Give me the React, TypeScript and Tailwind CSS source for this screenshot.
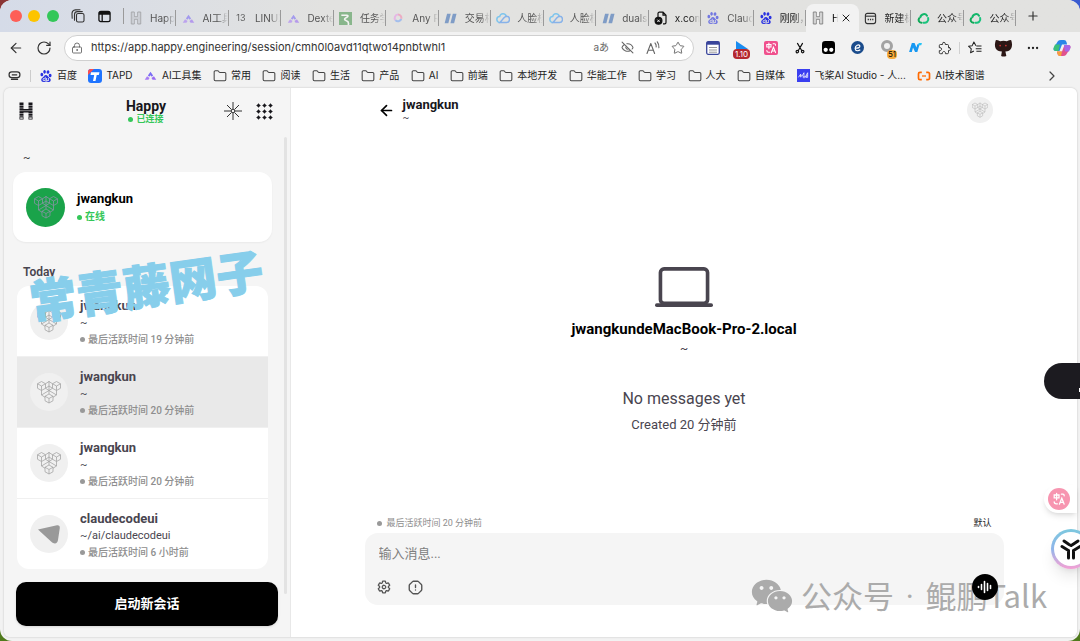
import type { ReactNode } from "react";
import clsx from "clsx";
import {
  ArrowLeft,
  ChevronRight,
  Ellipsis,
  EyeOff,
  Folder,
  LockKeyhole,
  OctagonAlert,
  Plus,
  RotateCw,
  Star,
  X,
} from "lucide-react";
import { AiFillWechat } from "react-icons/ai";
import { IoExtensionPuzzleOutline, IoLaptopOutline, IoSettingsOutline } from "react-icons/io5";
import { SiBaidu } from "react-icons/si";

type TabItem = {
  title: string;
  icon: ReactNode;
  asleep?: boolean;
  active?: boolean;
};

type Session = {
  id: number;
  name: string;
  path: string;
  lastSeen: string;
  avatar: "cubes" | "triangle";
  selected?: boolean;
};

function HappyMark({ className }: { className?: string }) {
  return (
    <svg viewBox="0 0 14 16" className={className} fill="none" stroke="currentColor" aria-hidden="true">
      <path d="M1.500 1h3.500v5.500h4V1h3.500v14H9V9.500H5V15H1.500z" strokeWidth="1" />
      <path d="M3.200 1v14M10.800 1v14M3.200 8h7.600" strokeWidth=".4" />
    </svg>
  );
}

function HappyLogo() {
  return (
    <svg viewBox="0 0 14 18" className="h-[18px] w-[14px]" aria-hidden="true">
      <path d="M.5.500h4v6.500h5V.5h4v17h-4V10.500h-5v7h-4z" fill="#18171c" />
      <path d="M0 3.500h5M9 3.500h5M0 6h5M9 6h5M0 8.700h14M0 11.500h5M9 11.500h5M0 14h5M9 14h5" stroke="#f5f5f5" strokeWidth=".5" />
      <path d="M1.200 15.300h2.600v1.600H1.200zM10.200 15.300h2.600v1.600h-2.600z" fill="#bbb" />
    </svg>
  );
}

function HillsIcon() {
  return (
    <svg viewBox="0 0 14 14" className="size-[13px]" aria-hidden="true">
      <path d="M4.200 7 7 3l2.800 4L8.300 8.300 7 6.800 5.700 8.300z" fill="#7c6cf5" />
      <path d="M.8 11.500 3.300 7.800 6 9.800 4.800 11.500z" fill="#a87cf5" />
      <path d="M13.200 11.500 10.700 7.800 8 9.800l1.200 1.700z" fill="#9a6cf2" />
    </svg>
  );
}

function SlashIcon() {
  return (
    <svg viewBox="0 0 14 14" className="size-[13px]" aria-hidden="true">
      <path d="M3.300 2h4L4.700 12h-4zM9.500 2h4l-2.600 10h-4z" fill="#3f6fb5" />
    </svg>
  );
}

function CloudIcon() {
  return (
    <svg viewBox="0 0 14 14" className="size-[14px]" fill="none" strokeWidth="1.500" aria-hidden="true">
      <path d="M4 11.500a3 3 0 0 1-.3-6C4.500 2.300 9 1.700 10.200 5.200" stroke="#3fb3f5" />
      <path d="M4 11.500h6.300a3 3 0 0 0 .2-6.200C8.500 5.300 7.500 7.500 4 11.500z" stroke="#4b93f0" />
    </svg>
  );
}

function GreenSwirl() {
  return (
    <svg viewBox="0 0 14 14" className="size-[13px]" fill="none" strokeWidth="2.200" strokeLinecap="round" aria-hidden="true">
      <path d="M3.600 5.600C4.500 1.800 9 1.200 10.800 4" stroke="#12b76a" />
      <path d="M12 6.500c1 3.300-2 5.800-5 5" stroke="#19c37d" />
      <path d="M4.800 11.500C2 11.300 1 8.800 2.300 6.800" stroke="#0fa958" />
    </svg>
  );
}

function RingIcon() {
  return (
    <svg viewBox="0 0 14 14" className="size-[12px]" fill="none" strokeWidth="2.400" aria-hidden="true">
      <path d="M7 3a4 4 0 0 0-3 6.500" stroke="#e79be8" />
      <path d="M4 9.500A4 4 0 0 0 10.800 8" stroke="#7aa7f5" />
      <path d="M10.800 8A4 4 0 0 0 7 3" stroke="#f48ab0" />
    </svg>
  );
}

function TranslateGlyph({ className }: { className?: string }) {
  return (
    <svg viewBox="0 0 20 20" className={className} fill="none" stroke="#fff" strokeWidth="1.600" strokeLinecap="round" aria-hidden="true">
      <path d="M4 5h6v3.500H4zM7 3v8M13 4h2q1.500 0 1.500 2M4 13.500q0 2.500 2.500 2.500H8M10.500 16.500l3-7.500 3 7.500M11.500 14.300h4" />
    </svg>
  );
}

const tabs: TabItem[] = [
  { title: "Happy", icon: <HappyMark className="h-[14px] w-[12px] text-[#777]" />, asleep: true },
  { title: "AI工具集", icon: <HillsIcon />, asleep: true },
  { title: "LINUX DO", icon: <span className="text-[9px] text-black">13</span>, asleep: true },
  { title: "Dexter", icon: <HillsIcon />, asleep: true },
  {
    title: "任务学习",
    icon: (
      <svg viewBox="0 0 14 14" className="size-[13px]" aria-hidden="true">
        <path d="M0 0h14v14H0z" fill="#4f9a55" />
        <path d="M2.500 3.500H8.500Q11 4 8 6 4 8 8 9.500q3 1 2 4.500" fill="none" stroke="#fff" strokeWidth="1.800" />
      </svg>
    ),
    asleep: true,
  },
  { title: "Any Router", icon: <RingIcon />, asleep: true },
  { title: "交易相关", icon: <SlashIcon />, asleep: true },
  { title: "人脸核身", icon: <CloudIcon />, asleep: true },
  { title: "人脸核身", icon: <CloudIcon />, asleep: true },
  { title: "dualsub", icon: <SlashIcon />, asleep: true },
  {
    title: "x.com",
    icon: (
      <svg viewBox="0 0 14 14" className="size-[14px]" fill="none" stroke="#111" strokeWidth="1.200" aria-hidden="true">
        <path d="M4 6V2.500A1.300 1.300 0 0 1 5.300 1.200H9l3 3v7.300a1.300 1.300 0 0 1-1.300 1.300H9M9 1.200v3h3" />
        <circle cx="4.500" cy="9.800" r="3.400" fill="#111" />
        <path d="m3.300 8.600 2.400 2.400m0-2.400-2.400 2.400" stroke="#fff" strokeWidth=".9" />
      </svg>
    ),
  },
  { title: "Claude", icon: <SiBaidu className="size-[12px] text-[#2932e1]" />, asleep: true },
  { title: "刚刚，发布", icon: <SiBaidu className="size-[12px] text-[#2932e1]" /> },
  { title: "Happy", icon: <HappyMark className="h-[14px] w-[12px] text-[#777]" />, active: true },
  {
    title: "新建标签页",
    icon: (
      <svg viewBox="0 0 14 14" className="size-[13px]" fill="none" stroke="#333" strokeWidth="1.200" aria-hidden="true">
        <rect x="1.500" y="1.500" width="11" height="11" rx="2.200" />
        <path d="M1.500 4.500h11" />
        <path d="M4 8h1.300M6.400 8h1.300M8.800 8h1.300" strokeWidth="1.500" />
      </svg>
    ),
  },
  { title: "公众号", icon: <GreenSwirl /> },
  { title: "公众号", icon: <GreenSwirl /> },
];

const folderIcon = <Folder className="size-[14px] text-[#444]" strokeWidth={1.8} />;

const bookmarks: { title: string; icon: ReactNode }[] = [
  { title: "百度", icon: <SiBaidu className="size-[12px] text-[#2932e1]" /> },
  {
    title: "TAPD",
    icon: (
      <svg viewBox="0 0 14 14" className="size-[14px]" aria-hidden="true">
        <rect width="14" height="14" rx="3" fill="#1f74ff" />
        <path d="M3 0h3L0 6V3a3 3 0 0 1 3-3z" fill="#ff4b4b" />
        <path d="M3 3.300h8.500L10.800 6H8.700l-1.200 6H5l1.200-6H2.500z" fill="#fff" />
      </svg>
    ),
  },
  { title: "AI工具集", icon: <HillsIcon /> },
  { title: "常用", icon: folderIcon },
  { title: "阅读", icon: folderIcon },
  { title: "生活", icon: folderIcon },
  { title: "产品", icon: folderIcon },
  { title: "AI", icon: folderIcon },
  { title: "前端", icon: folderIcon },
  { title: "本地开发", icon: folderIcon },
  { title: "华能工作", icon: folderIcon },
  { title: "学习", icon: folderIcon },
  { title: "人大", icon: folderIcon },
  { title: "自媒体", icon: folderIcon },
  {
    title: "飞桨AI Studio - 人...",
    icon: (
      <svg viewBox="0 0 14 14" className="size-[13px]" aria-hidden="true">
        <path d="M0 0h14v14H0z" fill="#3a3ff0" />
        <path d="M1.500 9 4 5.500V9M3 7.500h2.500L7.500 4v6M6 8.500h3L11.500 4v5H9.500L11 6.500" fill="none" stroke="#fff" strokeWidth=".8" />
      </svg>
    ),
  },
  {
    title: "AI技术图谱",
    icon: (
      <svg viewBox="0 0 14 14" className="size-[14px]" fill="none" stroke="#ff6a00" strokeWidth="1.700" aria-hidden="true">
        <path d="M4.800 3.300H3a1.500 1.500 0 0 0-1.500 1.500v4.400A1.500 1.500 0 0 0 3 10.700h1.800M9.200 3.300H11a1.500 1.500 0 0 1 1.500 1.500v4.400a1.500 1.500 0 0 1-1.500 1.500H9.200" />
        <path d="M5 7h4" strokeWidth="1.300" />
      </svg>
    ),
  },
];

const sessions: Session[] = [
  { id: 1, name: "jwangkun", path: "~", lastSeen: "最后活跃时间 19 分钟前", avatar: "cubes" },
  { id: 2, name: "jwangkun", path: "~", lastSeen: "最后活跃时间 20 分钟前", avatar: "cubes", selected: true },
  { id: 3, name: "jwangkun", path: "~", lastSeen: "最后活跃时间 20 分钟前", avatar: "cubes" },
  { id: 4, name: "claudecodeui", path: "~/ai/claudecodeui", lastSeen: "最后活跃时间 6 小时前", avatar: "triangle" },
];

function Cubes({ className }: { className?: string }) {
  return (
    <svg viewBox="0 0 48 48" className={className} fill="none" stroke="currentColor" strokeWidth="1.500" strokeLinejoin="round" aria-hidden="true">
      {/* corner cubes */}
      <path d="M9 3l8 4.500v9L9 21l-8-4.500v-9zM1 7.500 9 12l8-4.500M9 12v9" />
      <path d="M39 3l8 4.500v9L39 21l-8-4.500v-9zM31 7.500l8 4.500 8-4.500M39 12v9" />
      <path d="M24 28l8 4.500v9L24 46l-8-4.500v-9zM16 32.500l8 4.500 8-4.500M24 37v9" />
      {/* core */}
      <path d="M24 2v26M17 7.500 24 3l7 4.500M17 16.500 24 12l7 4.500M9 21v9l7 4.500M39 21v9l-7 4.500M9 30l15-9 15 9M17 16.500 24 21l7-4.500" />
    </svg>
  );
}

function Avatar({ kind }: { kind: Session["avatar"] }) {
  return (
    <span className="flex size-[38px] shrink-0 items-center justify-center rounded-full bg-[#f0f0f0] text-[#a0a0a0]">
      {kind === "cubes" ? (
        <Cubes className="size-6" />
      ) : (
        <svg viewBox="0 0 24 24" className="size-6" aria-hidden="true">
          <path d="M1 7.500 20 3.200Q23 2.800 22.800 6L21 18q-.8 4.500-5 3Q15 20.500 13.500 19z" fill="#999" />
        </svg>
      )}
    </span>
  );
}

function Tab({ tab }: { tab: TabItem }) {
  return (
    <button
      type="button"
      className={clsx(
        "flex h-full min-w-0 flex-1 items-center pl-[5px] text-[10px] whitespace-nowrap",
        tab.active ? "rounded-t-lg bg-[#f2f2f2]" : "text-[#222]"
      )}
    >
      <span className={clsx("flex w-[14px] shrink-0 justify-center", tab.asleep && "opacity-60")}>{tab.icon}</span>
      <span
        className={clsx(
          "ml-[7px] min-w-0 overflow-hidden text-left [mask-image:linear-gradient(to_right,black_60%,transparent)]",
          tab.active ? "w-[6px]" : "flex-1",
          tab.asleep && "text-[#555]"
        )}
      >
        {tab.title}
      </span>
      {tab.active ? (
        <X className="ml-[2px] size-3 shrink-0 text-[#222]" strokeWidth={2} />
      ) : (
        <span className="h-4 w-px shrink-0 bg-[#9a9a9a]" />
      )}
    </button>
  );
}

function TabStrip() {
  return (
    <div className="flex h-8 shrink-0 items-center bg-linear-to-r from-[#d5dbe8] via-[#e2e2e0] via-30% to-[#e2e2e0] pr-10 pl-[10px]">
      <div className="flex w-[113px] shrink-0 items-center">
        <span className="size-3 rounded-full bg-[#fe5f57]" />
        <span className="ml-[6px] size-3 rounded-full bg-[#fdc400]" />
        <span className="ml-[7px] size-3 rounded-full bg-[#34c759]" />
        <svg viewBox="0 0 14 14" className="ml-3 size-[14px]" fill="none" stroke="#333" strokeWidth="1.100" strokeLinejoin="round" strokeLinecap="round" aria-hidden="true">
          <rect x="5.500" y="4.500" width="7.500" height="8.500" rx="1.600" />
          <path d="M3.500 11.200V5.500A3 3 0 0 1 6.500 2.600h4.800M1.200 9.300 1 5A4 4 0 0 1 4.500.9L9 .8" />
        </svg>
        <svg viewBox="0 0 14 14" className="ml-[13px] size-[13px]" fill="none" stroke="#111" strokeWidth="1.400" aria-hidden="true">
          <rect x="1" y="1.500" width="12" height="11" rx="2" />
          <path d="M1 3.500h12" strokeWidth="3" />
          <path d="M4.500 4v8.500" />
        </svg>
      </div>
      <span className="h-4 w-px shrink-0 bg-[#9a9a9a]" />
      <div className="flex h-full min-w-0 flex-1 items-center pt-1">
        {tabs.map((tab, index) => (
          <Tab key={index} tab={tab} />
        ))}
      </div>
      <button type="button" aria-label="新建标签" className="ml-[10px] text-[#333]">
        <Plus className="size-[14px]" strokeWidth={2} />
      </button>
    </div>
  );
}

function Tool({ label, children }: { label: string; children: ReactNode }) {
  return (
    <button type="button" aria-label={label} className="relative flex h-7 w-[29px] shrink-0 items-center justify-center text-[#222]">
      {children}
    </button>
  );
}

function Toolbar() {
  return (
    <div className="flex h-[31px] shrink-0 items-center pl-2">
      <button type="button" aria-label="后退" className="text-[#333]">
        <ArrowLeft className="size-4" strokeWidth={1.8} />
      </button>
      <button type="button" aria-label="刷新" className="ml-3 text-[#333]">
        <RotateCw className="size-4" strokeWidth={1.8} />
      </button>
      <div className="ml-3 flex h-[26px] min-w-0 flex-1 items-center rounded-full border border-[#d0d0d0] bg-white pr-2 pl-[6px] text-[#666]">
        <LockKeyhole className="size-3 shrink-0" strokeWidth={1.8} />
        <input
          aria-label="地址"
          defaultValue="https://app.happy.engineering/session/cmh0l0avd11qtwo14pnbtwhl1"
          className="ml-2 min-w-0 flex-1 bg-transparent text-[11px] text-[#333] outline-none"
        />
        <button type="button" className="text-[10px]">aあ</button>
        <EyeOff className="ml-3 size-[13px] shrink-0" />
        <button type="button" aria-label="大声朗读" className="ml-3">
          <svg viewBox="0 0 14 14" className="size-[14px]" fill="none" stroke="currentColor" strokeWidth="1.100" strokeLinecap="round" strokeLinejoin="round" aria-hidden="true">
            <path d="M1 12.500 4.800 2.500l3.800 10M2.300 9.300h5M9 2q1.500 1.500 1.200 4M11.300.8q2 2.500 1.600 6" />
          </svg>
        </button>
        <Star className="ml-[11px] size-[14px] shrink-0" strokeWidth={1.6} />
      </div>
      <div className="ml-1 flex shrink-0 items-center">
        <Tool label="阅读列表">
          <svg viewBox="0 0 14 14" className="size-[14px]" aria-hidden="true">
            <rect x=".7" y=".7" width="12.600" height="12.600" rx="1.500" fill="#fff" stroke="#39459b" strokeWidth="1.300" />
            <path d="M.7.700h12.600v3H.7z" fill="#39459b" />
            <path d="M3 6.500h8M3 9h8M3 11.200h8" stroke="#999" />
          </svg>
        </Tool>
        <Tool label="计时">
          <svg viewBox="0 0 12 10" className="-mt-1 h-[10px] w-3" aria-hidden="true">
            <path d="M0 0l12 8H0z" fill="#1a8cf0" />
          </svg>
          <span className="absolute bottom-[3px] rounded-sm bg-[#b5282f] px-[2px] text-[8px] leading-[10px] text-white">1.10</span>
        </Tool>
        <Tool label="翻译">
          <TranslateGlyph className="size-[14px] rounded-xs bg-[#f0508d]" />
        </Tool>
        <Tool label="剪藏">
          <svg viewBox="0 0 12 14" className="h-3 w-[10px]" fill="none" stroke="#111" strokeWidth="1.400" strokeLinecap="round" aria-hidden="true">
            <path d="M3 1.500 8 10M9 1.500 4 10" />
            <circle cx="2.800" cy="11.300" r="1.500" />
            <circle cx="9.200" cy="11.300" r="1.500" />
          </svg>
        </Tool>
        <Tool label="油猴">
          <svg viewBox="0 0 14 14" className="size-[13px]" aria-hidden="true">
            <rect width="14" height="14" rx="3.500" />
            <circle cx="4" cy="9.500" r="2.300" fill="#fff" />
            <circle cx="10" cy="9.500" r="2.300" fill="#fff" />
          </svg>
        </Tool>
        <Tool label="e">
          <svg viewBox="0 0 14 14" className="size-[13px]" fill="none" stroke="#fff" strokeWidth="1.300" aria-hidden="true">
            <circle cx="7" cy="7" r="7" fill="#1b4c8c" stroke="none" />
            <path d="M4.800 7.500c3 .6 5.400-.7 4.600-2.500C8.500 3.200 4.500 4.500 4.500 8c0 3 3.500 3 5.500 1.500" />
          </svg>
        </Tool>
        <Tool label="过滤">
          <span className="-mt-1 size-3 rounded-full border-3 border-[#a3a3a3]" />
          <span className="absolute right-1 bottom-[3px] rounded-sm bg-[#f5ac3c] px-[1px] text-[8px] leading-[9px] text-black">51</span>
        </Tool>
        <Tool label="N">
          <svg viewBox="0 0 14 12" className="h-[11px] w-[13px]" aria-hidden="true">
            <path d="M3 1h3l2 5 1-3.500h2.500L9 11H6.500L4.300 6 3 11H0z" fill="#1698f2" />
            <path d="M10.500 1H14l-.7 2.500H9.800z" fill="#27c4f5" />
          </svg>
        </Tool>
        <Tool label="扩展">
          <IoExtensionPuzzleOutline className="size-[14px]" />
        </Tool>
      </div>
      <span className="h-3 w-px bg-[#d0d0d0]" />
      <div className="mr-1 flex shrink-0">
        <Tool label="收藏夹">
          <svg viewBox="0 0 15 14" className="h-[13px] w-[14px]" fill="none" stroke="currentColor" strokeWidth="1.100" strokeLinejoin="round" aria-hidden="true">
            <path d="M8.500 5 6.300 1 4.500 5l-4 .6 3 2.900-.8 4.200 3.600-2M9 5.500h5.500M8.300 8.300h6.200M9 11h5.500" />
          </svg>
        </Tool>
        <Tool label="账户">
          <svg viewBox="0 0 20 20" className="size-[19px]" aria-hidden="true">
            <path d="M2 2Q4 2 6.500 3.500q3.500-1 7 0Q16 2 18 2q2 5 0 9-1.500 3-6 3.200l1 4.800q-3 1.200-5.500 0l.8-4.800Q3.500 14 1.800 11 0 7 2 2z" fill="#2c1715" />
            <circle cx="6.500" cy="8" r=".9" fill="#c33" />
            <circle cx="12.500" cy="8" r=".9" fill="#c33" />
          </svg>
        </Tool>
        <Tool label="更多">
          <Ellipsis className="size-[14px]" />
        </Tool>
        <Tool label="Copilot">
          <svg viewBox="0 0 18 16" className="h-4 w-[18px]" aria-hidden="true">
            <path d="M5 1q1-1 3-1h3q2 0 2.500 2l.6 2.500H9L6.500 11H3Q0 11 .6 8z" fill="#2a86e8" />
            <path d="M.6 8 2 4.500h5L5.500 11H3Q0 11 .6 8z" fill="#3ac07a" />
            <path d="M13 15q-1 1-3 1H7q-2 0-2.500-2l-.6-2.500H9L11.500 5H15q3 0 2.400 3z" fill="#e0528e" />
            <path d="M11 5.500 11.500 5H15q3 0 2.400 3L16 11.500h-4z" fill="#a766e8" />
            <path d="M4 11.500h5l-1 4.500H7q-2 0-2.500-2z" fill="#f7a23b" />
          </svg>
        </Tool>
      </div>
    </div>
  );
}

function BookmarkBar() {
  return (
    <nav className="flex h-[25px] shrink-0 items-center pr-5 pl-2 text-[10px] text-[#222]">
      <svg viewBox="0 0 14 10" className="h-[9px] w-[13px] shrink-0" fill="none" stroke="#333" strokeWidth="1.400" aria-hidden="true">
        <rect x="1" y="1" width="12" height="6.500" rx="3" />
        <path d="M4 4.200h6M3 9.300h8" />
      </svg>
      <span className="mr-2 ml-[9px] h-3 w-px shrink-0 bg-[#ccc]" />
      <div className="mr-[59px] flex min-w-0 flex-1 items-center justify-between whitespace-nowrap">
        {bookmarks.map((item) => (
          <a key={item.title} href="#" className="flex shrink-0 items-center gap-1">
            <span className="flex w-[14px] justify-center">{item.icon}</span>
            {item.title}
          </a>
        ))}
      </div>
      <button type="button" aria-label="更多书签">
        <ChevronRight className="size-4 text-[#444]" strokeWidth={1.8} />
      </button>
    </nav>
  );
}

function Sidebar() {
  return (
    <aside className="relative flex w-[287px] shrink-0 flex-col border-r border-[#e8e8e8] bg-[#f5f5f5]">
      <header className="grid h-[46px] shrink-0 grid-cols-[1fr_auto_1fr] items-center pr-[17px] pl-[15px]">
        <HappyLogo />
        <div className="flex flex-col items-center pt-[2px]">
          <h1 className="text-[14px] leading-[15px] font-bold text-[#18171c]">Happy</h1>
          <p className="flex items-center gap-[3px] text-[9px] leading-[11px] font-bold text-[#34c759]">
            <span className="size-[5px] rounded-full bg-[#34c759]" />
            已连接
          </p>
        </div>
        <div className="flex items-center justify-end gap-[14px]">
          <button type="button" aria-label="特别">
            <svg viewBox="0 0 18 18" className="size-[18px]" fill="none" stroke="#333" strokeWidth="1" aria-hidden="true">
              <path d="M9 0v7M9 11v7M0 9h7M11 9h7M3 3l4.500 4.500M10.500 10.500 15 15M15 3l-4.500 4.500M7.500 10.500 3 15" />
              <circle cx="9" cy="9" r="1.800" />
            </svg>
          </button>
          <button type="button" aria-label="应用">
            <svg viewBox="0 0 17 17" className="size-[17px]" fill="#18171c" aria-hidden="true">
              {[2.5, 8.5, 14.5].map((y) =>
                [2.5, 8.5, 14.5].map((x) => (
                  <path key={`${x}-${y}`} d={`M${x - 2.3} ${y}l1.300-1 1-1.300 1 1.300 1.300 1-1.300 1-1 1.300-1-1.300z`} />
                ))
              )}
            </svg>
          </button>
        </div>
      </header>

      <div className="min-h-0 flex-1 overflow-hidden">
        <p className="px-[19px] pt-4 pb-[6px] text-[11px] leading-4 text-[#333]">~</p>
        <button type="button" className="ml-[9px] flex h-[70px] w-[259px] items-center rounded-[13px] bg-white pl-[13px] text-left shadow-xs">
          <span className="flex size-[39px] items-center justify-center rounded-full bg-[#1aa34a] text-[#8c93a8]">
            <Cubes className="size-6" />
          </span>
          <span className="ml-3 flex flex-col pt-[2px]">
            <span className="text-[13px] leading-[18px] font-bold text-black">jwangkun</span>
            <span className="flex items-center gap-[3px] text-[10px] leading-[18px] font-bold text-[#34c759]">
              <span className="size-[5px] rounded-full bg-[#34c759]" />
              在线
            </span>
          </span>
        </button>

        <h2 className="px-[19px] pt-[22px] pb-[6px] text-[12px] leading-4 font-semibold text-[#49454f]">Today</h2>
        <ul className="mr-[22px] ml-[13px] overflow-hidden rounded-xl bg-white">
          {sessions.map((session) => (
            <li key={session.id} className="border-b border-[#f0f0f0] last:border-b-0">
              <button
                type="button"
                className={clsx(
                  "flex h-[70px] w-full items-center gap-3 pl-[13px] text-left",
                  session.selected && "bg-[#e9e9e9]"
                )}
              >
                <Avatar kind={session.avatar} />
                <span className="flex flex-col pt-[2px] leading-[17px]">
                  <span className="text-[13px] font-bold text-[#49454f]">{session.name}</span>
                  <span className="text-[11px] text-[#49454f]">{session.path}</span>
                  <span className="flex items-center gap-[3px] text-[10px] font-medium text-[#8e8e8e]">
                    <span className="size-[5px] rounded-full bg-[#999]" />
                    {session.lastSeen}
                  </span>
                </span>
              </button>
            </li>
          ))}
        </ul>
      </div>

      <button type="button" className="mx-3 mb-[11px] h-11 shrink-0 rounded-[10px] bg-black text-[13px] font-bold text-white shadow-sm">
        启动新会话
      </button>
      <span className="absolute top-[49px] right-[3px] bottom-[43px] w-[3px] rounded-full bg-[#e3e3e3]" />
    </aside>
  );
}

function Conversation() {
  return (
    <main className="flex min-w-0 flex-1 flex-col items-center bg-white">
      <header className="flex h-11 w-full max-w-[639px] shrink-0 items-center pr-[11px] pl-[13px]">
        <button type="button" aria-label="返回">
          <ArrowLeft className="size-[17px] text-black" strokeWidth={2.4} />
        </button>
        <div className="ml-2 flex-1">
          <h2 className="text-[13px] leading-[15px] font-bold text-[#18171c]">jwangkun</h2>
          <p className="text-[10px] leading-3 text-[#49454f]">~</p>
        </div>
        <span className="flex size-[26px] items-center justify-center rounded-full bg-[#f0f0f0] text-[#b0b0b0]">
          <Cubes className="size-4" />
        </span>
      </header>

      <section className="flex w-full flex-1 flex-col items-center justify-center pt-11 text-[#49454f]">
        <IoLaptopOutline className="size-[58px]" />
        <h3 className="mt-[3px] text-[15px] leading-5 font-bold text-black">jwangkundeMacBook-Pro-2.local</h3>
        <p className="text-[12px] leading-5">~</p>
        <p className="mt-7 text-[16px] leading-6">No messages yet</p>
        <p className="mt-1 text-[13px] leading-5">Created 20 分钟前</p>
      </section>

      <form className="mb-8 w-full max-w-[639px] shrink-0">
        <div className="mb-[3px] flex items-center justify-between px-3 text-[9px] leading-[14px]">
          <span className="flex items-center gap-[5px] text-[#8e8e8e]">
            <span className="size-[5px] rounded-full bg-[#999]" />
            最后活跃时间 20 分钟前
          </span>
          <span className="text-[#222]">默认</span>
        </div>
        <div className="rounded-[13px] bg-[#f5f5f5] px-[6px] pt-3 pb-[5px]">
          <input
            aria-label="消息"
            placeholder="输入消息..."
            className="block h-[18px] w-full bg-transparent px-2 text-[13px] outline-none placeholder:text-[#808080]"
          />
          <div className="mt-[11px] flex h-[26px] items-center">
            <button type="button" aria-label="设置" className="flex w-[26px] justify-center text-[#555]">
              <IoSettingsOutline className="size-[14px] [&_path]:stroke-[46px]" />
            </button>
            <button type="button" aria-label="中止" className="ml-[6px] flex w-[26px] justify-center text-[#555]">
              <OctagonAlert className="size-[15px]" strokeWidth={2.2} />
            </button>
            <button type="button" aria-label="语音" className="relative z-20 ml-auto flex size-[26px] items-center justify-center rounded-full bg-black">
              <svg viewBox="0 0 16 14" className="h-[14px] w-4" stroke="#fff" strokeWidth="1.600" strokeLinecap="round" aria-hidden="true">
                <path d="M1.500 6.500v1M4.500 4.500v5M7.500 1.500v11M10.500 3.500v7M13.500 5.500v3" />
              </svg>
            </button>
          </div>
        </div>
      </form>
    </main>
  );
}

function FloatingWidgets() {
  return (
    <>
      <div className="absolute top-[363px] right-0 h-9 w-9 rounded-l-full bg-[#1c1b20]">
        <span className="absolute right-0 bottom-[7px] h-1 w-px bg-white" />
      </div>
      <button type="button" aria-label="网页翻译" className="absolute top-[485px] right-[3px] flex h-7 w-[33px] items-center rounded-l-full bg-white pl-1 shadow-md">
        <TranslateGlyph className="size-[22px] rounded-full bg-[#f795b0] p-[3px]" />
      </button>
      <button
        type="button"
        aria-label="助手"
        className="absolute top-[529px] -right-[11px] flex size-10 items-center justify-center rounded-full bg-linear-to-b from-[#7cc8de] via-[#8fb5ea] to-[#f3a0d4] p-[3px] shadow-lg"
      >
        <span className="flex size-full items-center justify-center rounded-full bg-white">
          <svg viewBox="0 0 24 24" className="size-6" fill="none" stroke="#111" strokeWidth="3" strokeLinecap="round" aria-hidden="true">
            <path d="M5 4l5 3.500L12 8.500M19 4l-6 4M3 9.500l6.500 4V21M21 9.500l-6.500 4V21" />
          </svg>
        </span>
      </button>
      <div className="pointer-events-none absolute top-[262px] left-[29px] -rotate-8 text-[47px] leading-[50px] font-black whitespace-nowrap text-[#87ceeb] [-webkit-text-stroke:1px_#87ceeb]">
        常青藤网子
      </div>
      <div className="pointer-events-none absolute right-[33px] bottom-[22px] z-10 flex items-center font-['Noto_Sans_CJK_SC',sans-serif] text-[31px] leading-10 whitespace-nowrap text-[#ababab]">
        <AiFillWechat className="mr-[6px] size-[46px]" />
        <span>
          公众号
          <span className="mx-1 font-[Roboto,sans-serif]"> · </span>
          鲲鹏Talk
        </span>
      </div>
    </>
  );
}

export default function App() {
  return (
    <div className="h-screen overflow-hidden bg-[conic-gradient(#3a5bd0_25%,#4f7a1c_25%_75%,#8a3434_75%)] font-[Inter,'Noto_Sans_CJK_SC',sans-serif]">
      <div className="relative flex h-full flex-col overflow-hidden rounded-xl bg-[#f2f2f2]">
        <TabStrip />
        <Toolbar />
        <BookmarkBar />
        <div className="mr-[3px] mb-1 ml-1 flex min-h-0 flex-1 overflow-hidden rounded-md font-[Roboto,'Noto_Sans_CJK_SC',sans-serif] shadow-[0_0_2px_#bbb]">
          <Sidebar />
          <Conversation />
        </div>
        <FloatingWidgets />
      </div>
    </div>
  );
}
